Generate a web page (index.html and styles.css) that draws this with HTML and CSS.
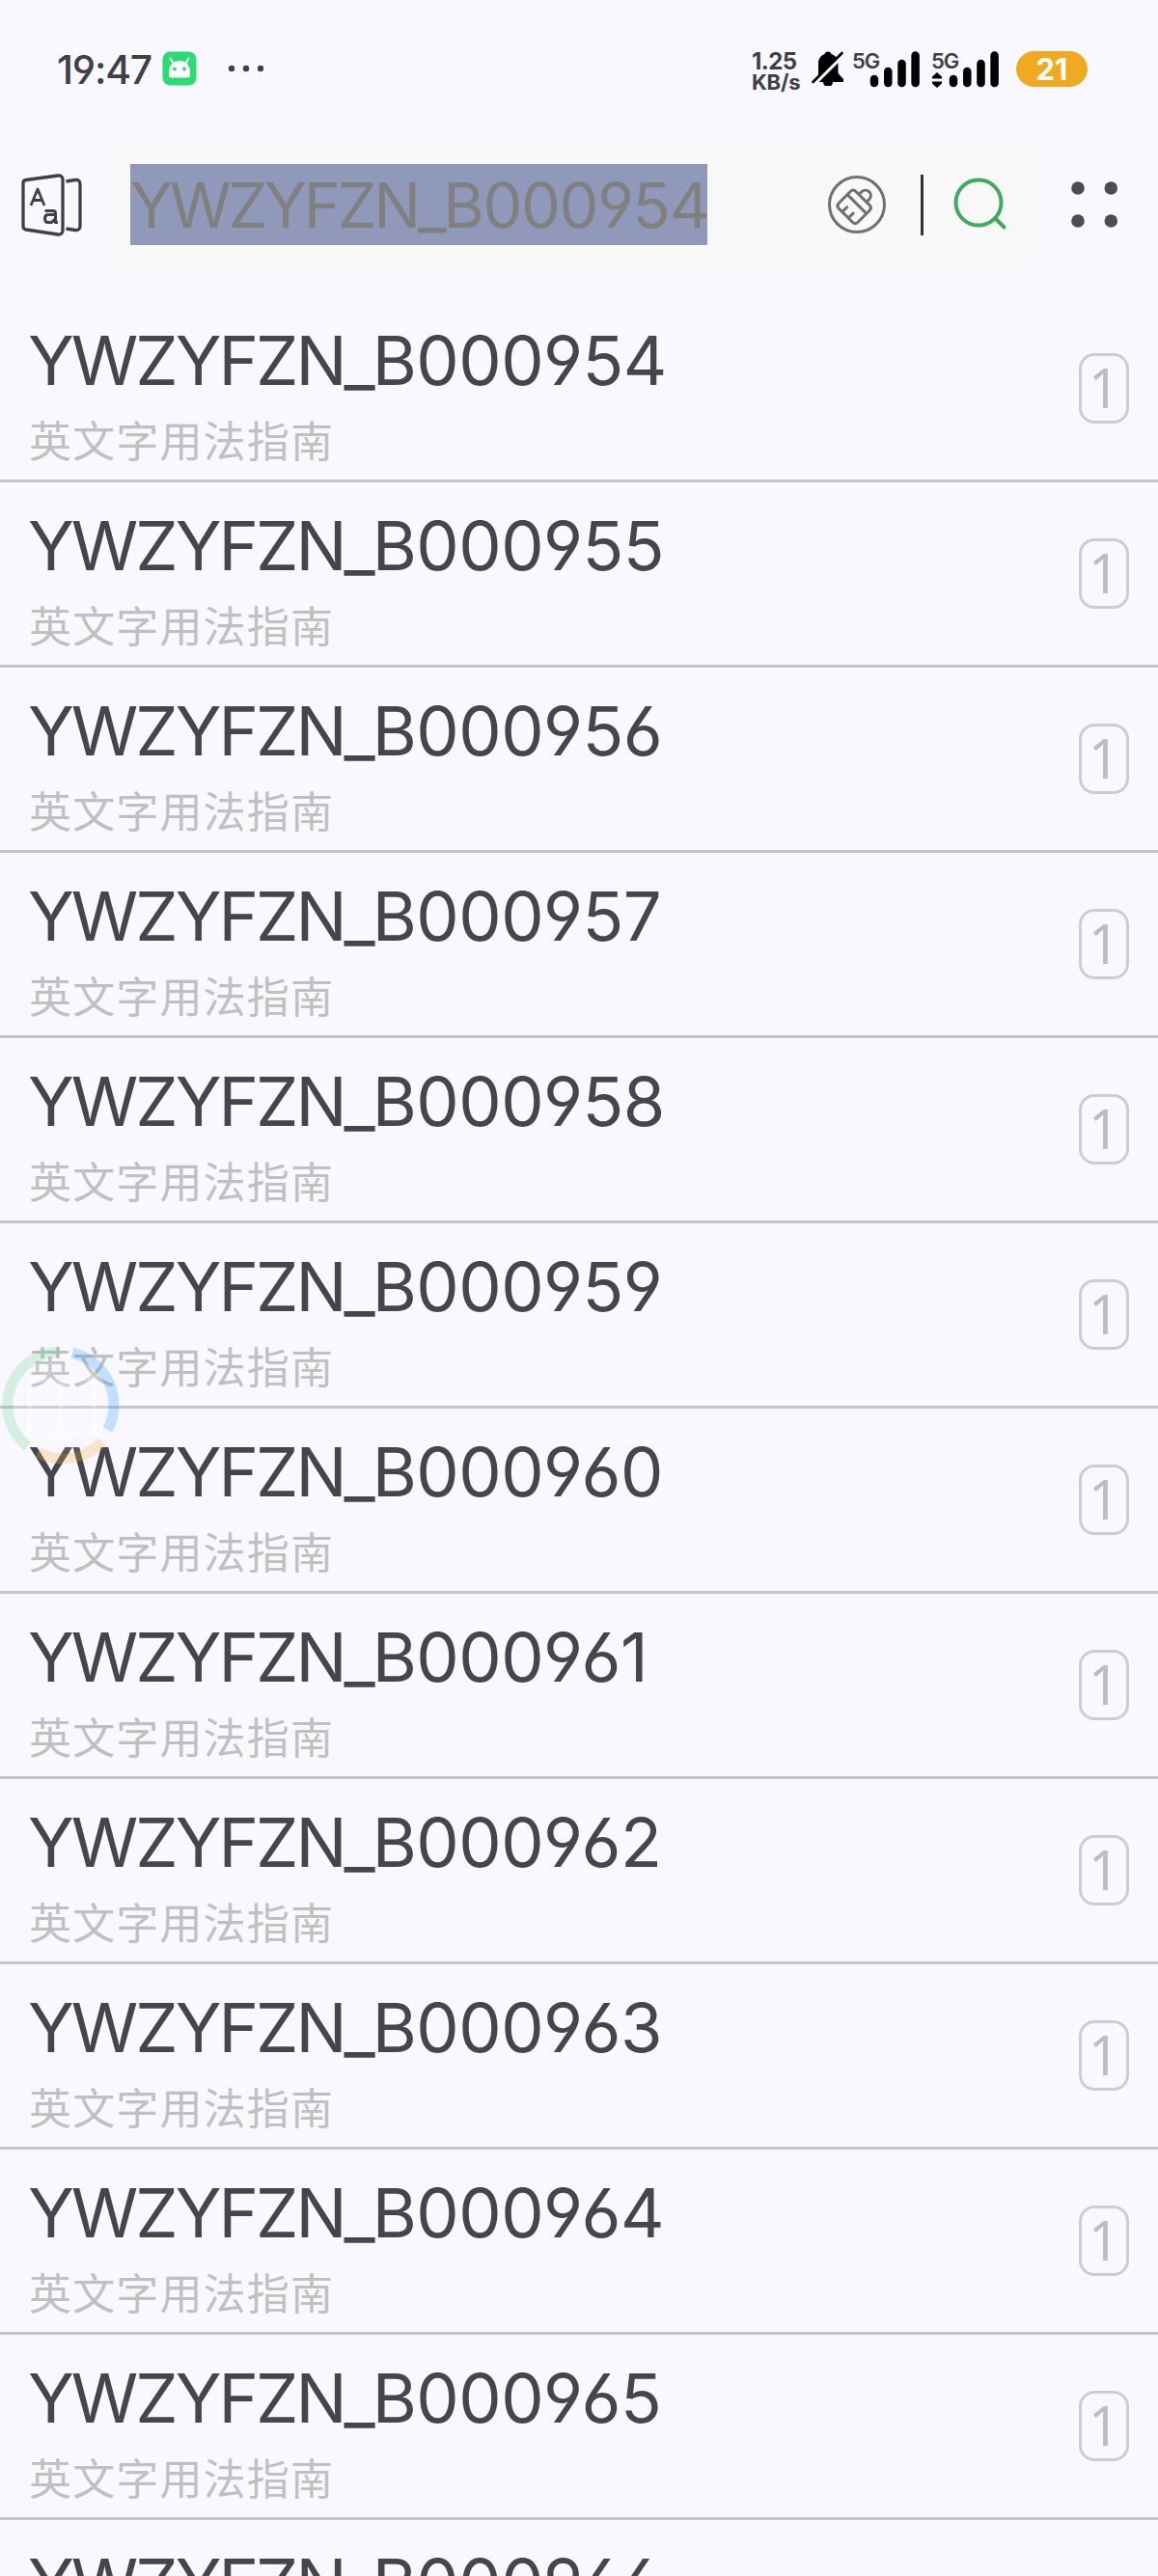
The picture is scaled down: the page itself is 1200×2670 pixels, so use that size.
FILE: index.html
```html
<!DOCTYPE html>
<html lang="zh-CN">
<head>
<meta charset="utf-8">
<title>英文字用法指南</title>
<link rel="stylesheet" href="styles.css">
</head>
<body>
<div class="screen">
  <header class="status">
    <span class="clock">19:47</span>
    <svg class="droid" width="36" height="36" viewBox="0 0 36 36"><rect x=".5" y=".5" width="35" height="35" rx="8" fill="#2bdc75"/><path d="M7 25v-4a11 11 0 0 1 22 0v4q0 2.500-2.500 2.500h-17Q7 27.500 7 25z" fill="#fff"/><path d="M11.500 12.500 8.500 7.500M24.500 12.500l3-5" stroke="#fff" stroke-width="2" stroke-linecap="round"/><circle cx="13" cy="18.500" r="2" fill="#2bdc75"/><circle cx="23" cy="18.500" r="2" fill="#2bdc75"/></svg>
    <svg class="more" width="38" height="8" viewBox="0 0 38 8"><g fill="#404044"><circle cx="4" cy="4" r="3.200"/><circle cx="19" cy="4" r="3.200"/><circle cx="34" cy="4" r="3.200"/></g></svg>
    <span class="net"><span class="rate">1.25</span><span class="unit">KB/s</span></span>
    <svg class="bell" width="34" height="36" viewBox="0 0 34 36"><path d="M17 .5c2 0 3 1 3.500 2.500C25 4.500 27.500 8 27.500 13v10l5.500 6v3H22a5 5 0 0 1-10 0H3l4-7V13C7 8 9.500 4.500 13.500 3 14 1.500 15 .5 17 .5z" fill="#000"/><path d="M1 35.500 34 2.500" stroke="#faf8ff" stroke-width="4.500"/><path d="M1.500 32 31.500 2" stroke="#000" stroke-width="2.600" stroke-linecap="round"/></svg>
    <span class="sim first"><span class="gen">5G</span><svg class="bars" width="70" height="38" viewBox="0 0 70 38"><g stroke="#000" stroke-width="8.500" stroke-linecap="round"><path d="M23 29v4M37.300 21v12M51.500 13v20M65.600 4.500v28.500"/></g></svg></span>
    <span class="sim"><span class="gen">5G</span><svg class="bars" width="70" height="38" viewBox="0 0 70 38"><path d="M1 28.500v-2L6 22l5 4.500v2zM1 31.500v2L6 38l5-4.500v-2z" fill="#000"/><g stroke="#000" stroke-width="8.500" stroke-linecap="round"><path d="M23 29v4M37.300 21v12M51.500 13v20M65.600 4.500v28.500"/></g></svg></span>
    <span class="battery">21</span>
  </header>
  <div class="toolbar">
    <svg class="dict" width="64" height="66" viewBox="0 0 64 66" fill="none" stroke="#404148" stroke-width="3.300" stroke-linejoin="round"><path d="M5 7.500 38 3q5-.5 5 4.500v52q0 5-5 4.500L5 59q-3-.5-3-3.500v-45Q2 8 5 7.500z"/><path d="M46.500 9 56 7.500q5-.5 5 4.500v43q0 5-5 4.500L46.500 58"/><path d="M10 34 17 17l7 17M12.500 28.500h9" stroke-width="2.800"/><path d="M24.500 39.500H33q2.500 0 2.500 2.500v9.500h2.500M35.500 43.500H28q-3.500 0-3.500 4t3.500 4h3.500l4-4" stroke-width="3"/></svg>
    <div class="search">
      <span class="query">YWZYFZN_<span class="code">B000954</span></span>
      <svg class="brush" width="62" height="62" viewBox="0 0 62 62" fill="none" stroke="#707070" stroke-width="3"><circle cx="31" cy="31" r="28.500"/><g transform="translate(28.500 33) rotate(45)" stroke-linecap="round" stroke-linejoin="round"><path d="M-10-12h20q4 0 4 4V9q0 4-4 4h-20q-4 0-4-4V-8q0-4 4-4zM-14-3.500h28M-5 13V6M4 13V6M-5.500-12v-4a5.500 5.500 0 0 1 11 0v4"/></g></svg>
      <span class="divider"></span>
      <svg class="lens" width="58" height="58" viewBox="0 0 58 58" fill="none" stroke="#41aa60" stroke-width="4"><circle cx="27" cy="27" r="23.500"/><path d="M44 43 53.500 52.500" stroke-linecap="round"/></svg>
    </div>
    <svg class="grid" width="50" height="50" viewBox="0 0 50 50" fill="#4d4d4d"><circle cx="8" cy="8" r="6.800"/><circle cx="42.300" cy="8" r="6.800"/><circle cx="8" cy="42" r="6.800"/><circle cx="42.300" cy="42" r="6.800"/></svg>
  </div>
  <main class="list">
    <div class="row"><div class="entry"><div class="word">YWZYFZN_<span class="code">B000954</span></div><div class="source">英文字用法指南</div></div><span class="count">1</span></div>
    <div class="row"><div class="entry"><div class="word">YWZYFZN_<span class="code">B000955</span></div><div class="source">英文字用法指南</div></div><span class="count">1</span></div>
    <div class="row"><div class="entry"><div class="word">YWZYFZN_<span class="code">B000956</span></div><div class="source">英文字用法指南</div></div><span class="count">1</span></div>
    <div class="row"><div class="entry"><div class="word">YWZYFZN_<span class="code">B000957</span></div><div class="source">英文字用法指南</div></div><span class="count">1</span></div>
    <div class="row"><div class="entry"><div class="word">YWZYFZN_<span class="code">B000958</span></div><div class="source">英文字用法指南</div></div><span class="count">1</span></div>
    <div class="row"><div class="entry"><div class="word">YWZYFZN_<span class="code">B000959</span></div><div class="source">英文字用法指南</div></div><span class="count">1</span></div>
    <div class="row"><div class="entry"><div class="word">YWZYFZN_<span class="code">B000960</span></div><div class="source">英文字用法指南</div></div><span class="count">1</span></div>
    <div class="row"><div class="entry"><div class="word">YWZYFZN_<span class="code">B000961</span></div><div class="source">英文字用法指南</div></div><span class="count">1</span></div>
    <div class="row"><div class="entry"><div class="word">YWZYFZN_<span class="code">B000962</span></div><div class="source">英文字用法指南</div></div><span class="count">1</span></div>
    <div class="row"><div class="entry"><div class="word">YWZYFZN_<span class="code">B000963</span></div><div class="source">英文字用法指南</div></div><span class="count">1</span></div>
    <div class="row"><div class="entry"><div class="word">YWZYFZN_<span class="code">B000964</span></div><div class="source">英文字用法指南</div></div><span class="count">1</span></div>
    <div class="row"><div class="entry"><div class="word">YWZYFZN_<span class="code">B000965</span></div><div class="source">英文字用法指南</div></div><span class="count">1</span></div>
    <div class="row"><div class="entry"><div class="word">YWZYFZN_<span class="code">B000966</span></div></div></div>
  </main>
  <svg class="float" width="124" height="124" viewBox="-62 -62 124 124" fill="none" stroke-width="11"><circle r="50" fill="#fff" fill-opacity=".12"/><path d="M-32-27Q-14-29 0-20 14-29 34-27V30Q14 27 0 34-14 27-32 30zM0-20V34" stroke="#fff" stroke-opacity=".25" stroke-width="6"/><path d="M-1-55A55 55 0 0 0-34.500 43" stroke="#35d06a" stroke-opacity=".19"/><path d="M12-53.600A55 55 0 0 1 48.500 26" stroke="#2f9dff" stroke-opacity=".27"/><path d="M42.500 39A57 57 0 0 1-24 49.500" stroke="#f5b041" stroke-opacity=".28"/></svg>
</div>
</body>
</html>
```
FILE: styles.css
```css
* { box-sizing: border-box; }
body { margin: 0; background: #faf8ff; font-family: Inter, "Noto Sans CJK SC", sans-serif; font-feature-settings: "cv03", "cv04"; }
svg { display: block; flex: none; }
.screen { position: relative; width: 1200px; height: 2670px; overflow: hidden; }
.status { display: flex; height: 144px; padding: 53px 73px 0 59px; color: #404044; }
.clock { width: 109px; font-size: 41px; font-weight: 500; line-height: 38px; letter-spacing: -1.2px; }
.more { margin: 14px 0 0 32px; }
.net { display: flex; flex-direction: column; width: 52px; margin: -1px 0 0 505px; font-weight: 700; white-space: nowrap; }
.rate { font-size: 24px; line-height: 23px; letter-spacing: -.6px; }
.unit { font-size: 22px; line-height: 21px; letter-spacing: -.2px; }
.bell { margin-left: 10px; }
.sim { display: grid; width: 70px; margin-left: 12px; }
.first { margin-left: 8px; }
.gen, .bars { grid-area: 1 / 1; }
.gen { font-size: 22px; font-weight: 600; line-height: 20px; letter-spacing: -1px; }
.battery { width: 74px; height: 37px; margin-left: auto; border-radius: 19px; background: #f2a922; color: #fff; font-size: 31px; font-weight: 700; line-height: 38px; text-align: center; }
.toolbar { display: flex; align-items: center; height: 136px; padding-left: 22px; }
.search { display: flex; align-items: center; width: 970px; height: 136px; margin-left: 22px; padding-left: 27px; border-radius: 28px; background: #f8f8f8; }
.query { width: 598px; height: 84px; background: #9199bb; color: #808080; font-size: 64.800px; line-height: 85px; letter-spacing: -3.200px; white-space: nowrap; }
.query .code { letter-spacing: -1.300px; }
.brush { margin-left: 124px; }
.divider { width: 3px; height: 63px; margin-left: 35px; background: #333; }
.lens { margin-left: 30px; }
.grid { margin-left: 31px; }
.list { padding-top: 28px; }
.row { display: flex; justify-content: space-between; height: 192px; padding: 25px 30px 0; border-bottom: 3px solid #c5c5cd; }
.word { height: 100px; margin-left: -1px; font-size: 70.500px; line-height: 81px; letter-spacing: -3px; color: #45464d; white-space: nowrap; }
.word .code { letter-spacing: -.550px; }
.source { font-family: "Noto Sans CJK SC", sans-serif; font-size: 44px; line-height: 45px; letter-spacing: 1.150px; color: #c0c0c0; }
.count { width: 52px; height: 73px; margin-top: 33px; border: 3px solid #cdcdcd; border-radius: 16px; color: #bdbdbd; font-family: "Noto Sans", sans-serif; font-size: 56px; line-height: 65px; text-align: center; }
.float { position: absolute; left: 1px; top: 1394px; }
```
